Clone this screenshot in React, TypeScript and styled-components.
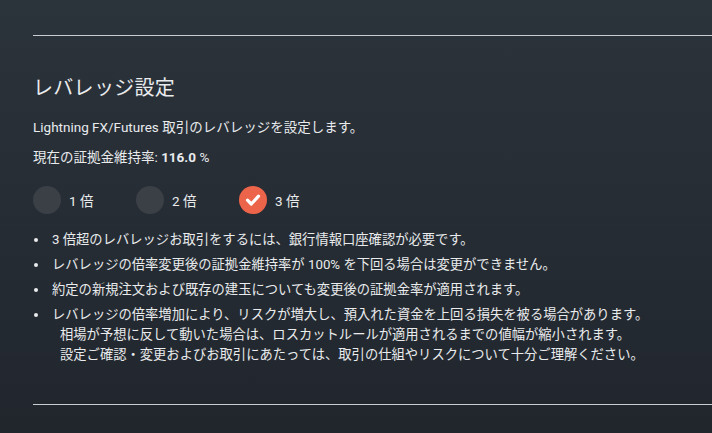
import React, { useState } from "react";
import styled, { createGlobalStyle } from "styled-components";

const Global = createGlobalStyle`
  html, body {
    margin: 0;
    padding: 0;
    height: 100%;
  }
  body {
    background: linear-gradient(180deg, #2b333b 0%, #21262d 100%);
    color: #e9ebed;
    font-family: Roboto, "Noto Sans CJK JP", sans-serif;
    overflow: hidden;
  }
  #root { min-height: 433px; }
`;

const Page = styled.div`
  width: 712px;
  height: 433px;
  box-sizing: border-box;
  padding: 35px 0 0 33px;
  background: linear-gradient(180deg, #2b333b 0%, #21262d 100%);
`;

const Section = styled.section`
  border-top: 1px solid #c9cdd1;
  border-bottom: 1px solid #c9cdd1;
  padding: 0 0 39px;
`;

const Title = styled.h2`
  margin: 38px 0 0;
  font-size: 20px;
  line-height: 28px;
  font-weight: 400;
  letter-spacing: 0.3px;
`;

const Text = styled.p<{ $gap: number }>`
  margin: ${(p) => p.$gap}px 0 0;
  font-size: 13.5px;
  line-height: 20px;
`;

const Strong = styled.strong`
  font-weight: 700;
`;

const Options = styled.div`
  display: flex;
  margin-top: 19px;
`;

const Option = styled.label`
  display: flex;
  align-items: center;
  width: 103px;
  cursor: pointer;
  font-size: 13.5px;
`;

const Circle = styled.span<{ $on: boolean }>`
  width: 28px;
  height: 28px;
  border-radius: 50%;
  background: ${(p) => (p.$on ? "#ec6449" : "#3b4047")};
  display: flex;
  align-items: center;
  justify-content: center;
  margin-right: 8px;
  flex: none;
`;

const Notes = styled.ul`
  margin: 16px 0 0;
  padding: 0;
  list-style: none;
`;

const Note = styled.li`
  position: relative;
  padding-left: 19px;
  font-size: 13.3px;
  line-height: 20px;
  margin-bottom: 5px;
  &:last-child { margin-bottom: 0; }
  &::before {
    content: "";
    position: absolute;
    left: 1px;
    top: 8px;
    width: 4px;
    height: 4px;
    border-radius: 50%;
    background: #e9ebed;
  }
`;

const Cont = styled.span`
  display: block;
  padding-left: 8px;
`;

const Check = () => (
  <svg width="18" height="18" viewBox="0 0 18 18">
    <path d="M3.5 9.2 L7.3 13 L14.5 5.2" fill="none" stroke="#fff" strokeWidth="3.2" strokeLinecap="round" strokeLinejoin="round" />
  </svg>
);

export default function App() {
  const [lev, setLev] = useState(3);
  return (
    <>
      <Global />
      <Page>
        <Section>
          <Title>レバレッジ設定</Title>
          <Text $gap={15}>Lightning FX/Futures 取引のレバレッジを設定します。</Text>
          <Text $gap={10}>
            現在の証拠金維持率: <Strong>116.0</Strong> %
          </Text>
          <Options>
            {[1, 2, 3].map((n) => (
              <Option key={n} onClick={() => setLev(n)}>
                <Circle $on={lev === n}>{lev === n && <Check />}</Circle>
                {n} 倍
              </Option>
            ))}
          </Options>
          <Notes>
            <Note>3 倍超のレバレッジお取引をするには、銀行情報口座確認が必要です。</Note>
            <Note>レバレッジの倍率変更後の証拠金維持率が 100% を下回る場合は変更ができません。</Note>
            <Note>約定の新規注文および既存の建玉についても変更後の証拠金率が適用されます。</Note>
            <Note>
              レバレッジの倍率増加により、リスクが増大し、預入れた資金を上回る損失を被る場合があります。
              <Cont>相場が予想に反して動いた場合は、ロスカットルールが適用されるまでの値幅が縮小されます。</Cont>
              <Cont>設定ご確認・変更およびお取引にあたっては、取引の仕組やリスクについて十分ご理解ください。</Cont>
            </Note>
          </Notes>
        </Section>
      </Page>
    </>
  );
}
